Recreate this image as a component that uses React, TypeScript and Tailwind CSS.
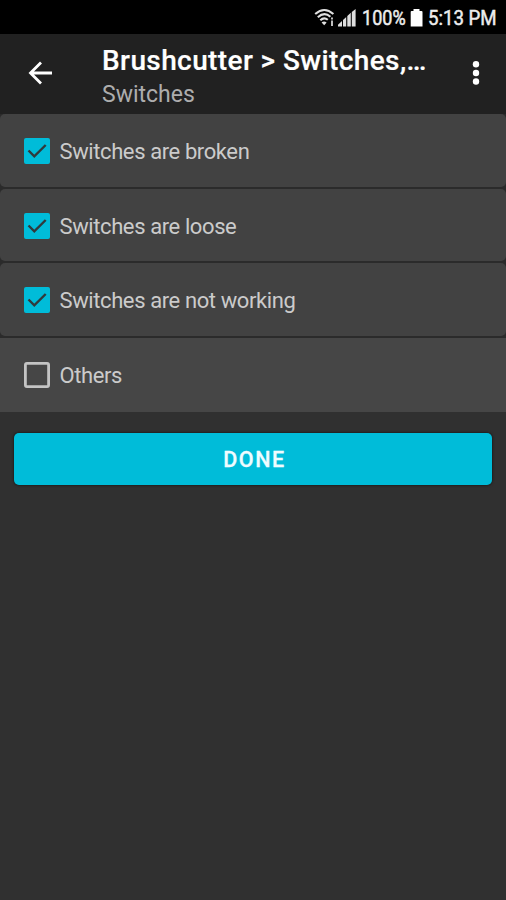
import React from "react";

const items = [
  { label: "Switches are broken", checked: true },
  { label: "Switches are loose", checked: true },
  { label: "Switches are not working", checked: true },
];

function Checkbox({ checked }: { checked: boolean }) {
  return checked ? (
    <svg width="26" height="26" viewBox="0 0 26 26" className="shrink-0">
      <rect width="26" height="26" rx="2" fill="#00bcd9" />
      <path d="M4.5 12.5L10.3 18.3L21.7 7" fill="none" stroke="#303a3c" strokeWidth="2.4" />
    </svg>
  ) : (
    <svg width="26" height="26" viewBox="0 0 26 26" className="shrink-0">
      <rect x="1.4" y="1.4" width="23.2" height="23.2" rx="1.5" fill="none" stroke="#c4c4c4" strokeWidth="2.8" />
    </svg>
  );
}

function StatusBar() {
  return (
    <div className="flex h-[34px] shrink-0 items-center bg-black pl-[314px] text-[20.5px] text-[#ededed]">
      <svg width="21" height="20" viewBox="0 0 21 20" fill="none" stroke="#e0e0e0" strokeWidth="2.1" className="mt-[2px] shrink-0">
        <path d="M1.2 6Q10.3 -2 19.4 6M3.8 9.3Q10.3 3.4 16.4 8.8M6.3 12.3Q10 8.6 13.8 11.8" />
        <path d="M7.6 14.4L10.2 17.3L12.6 14.4Q10 12.6 7.6 14.4Z" fill="#e0e0e0" stroke="none" />
        <path d="M18 9.5V11.4M18 12.6V18" strokeWidth="1.7" />
      </svg>
      <svg width="18" height="18" viewBox="0 0 18 18" fill="#dedede" className="ml-[3px] mt-[2px] shrink-0">
        <path d="M0 17.5V15.8L4 12V17.5ZM5 17.5V11L8.2 8V17.5ZM9.3 17.5V7L12.8 3.8V17.5ZM13.8 17.5V3L17.6 0V17.5Z" />
      </svg>
      <div className="ml-[6px] mt-[3px] w-[48px] shrink-0 whitespace-nowrap">
        <span className="inline-block origin-left scale-x-[0.88] [-webkit-text-stroke:0.5px_#ededed]">100%</span>
      </div>
      <svg width="13" height="18" viewBox="0 0 13 18" fill="#fff" className="mt-[2px] shrink-0">
        <path d="M3.5 0H9.5V2H11.5Q12.5 2 12.5 3V17.5H.7V3Q.7 2 1.5 2H3.5Z" />
      </svg>
      <div className="ml-[5px] mt-[3px] whitespace-nowrap">
        <span className="inline-block origin-left scale-x-[0.91] [-webkit-text-stroke:0.5px_#ededed]">5:13 PM</span>
      </div>
    </div>
  );
}

export default function App() {
  return (
    <div className="flex h-[900px] w-[506px] flex-col overflow-hidden bg-[#303030] font-['Roboto',sans-serif]">
      <StatusBar />
      <header className="flex h-20 shrink-0 bg-[#212121]">
        <svg width="24" height="24" viewBox="0 0 24 24" fill="none" stroke="#fff" strokeWidth="2.8" className="ml-7 mt-[27px] shrink-0">
          <path d="M24 12H2.5M13 1.5L2.5 12L13 22.5" />
        </svg>
        <div className="ml-[50px] w-[340px] whitespace-nowrap pt-[11px]">
          <h1 className="text-[28px] font-medium leading-[32px] tracking-[0.4px] text-white [-webkit-text-stroke:0.2px_#fff]">Brushcutter &gt; Switches,…</h1>
          <p className="text-[23px] leading-[35px] text-[#adadad]">Switches</p>
        </div>
        <svg width="8" height="26" viewBox="0 0 8 26" fill="#fff" className="ml-[30px] mt-[26px] shrink-0">
          <circle cx="4" cy="4.3" r="3.2" />
          <circle cx="4" cy="13" r="3.2" />
          <circle cx="4" cy="21.5" r="3.2" />
        </svg>
      </header>
      <main>
        <div className="flex flex-col gap-[2px] bg-[#2b2b2b]">
          {items.map((item) => (
            <label key={item.label} className="flex h-[72.7px] items-center gap-[9.5px] rounded-[5px] bg-[#424242] pl-6 pt-[1px] text-[22px] tracking-[-0.4px] text-[#cbcbcb]">
              <Checkbox checked={item.checked} />
              <span className="pt-[1px]">{item.label}</span>
            </label>
          ))}
          <label className="flex h-[73.5px] items-center gap-[9.5px] bg-[#464646] pl-6 text-[22px] tracking-[-0.4px] text-[#cbcbcb]">
            <Checkbox checked={false} />
            <span className="pt-[1px]">Others</span>
          </label>
        </div>
        <button className="mx-[14px] mt-[21px] flex h-[52px] w-[478px] items-center justify-center rounded-[5px] bg-[#00bcd9] pl-[3px] pt-[4px] text-[21.5px] font-medium tracking-[1.6px] text-[#f0fcff] shadow-[0_0_2px_1px_#202020] [-webkit-text-stroke:0.3px_#f0fcff]">
          DONE
        </button>
      </main>
    </div>
  );
}
